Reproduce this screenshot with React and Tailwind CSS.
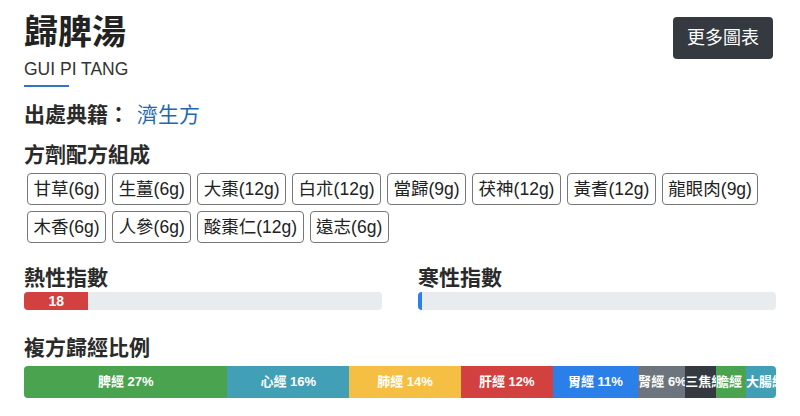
const herbs = [
  "甘草(6g)",
  "生薑(6g)",
  "大棗(12g)",
  "白朮(12g)",
  "當歸(9g)",
  "茯神(12g)",
  "黃耆(12g)",
  "龍眼肉(9g)",
  "木香(6g)",
  "人參(6g)",
  "酸棗仁(12g)",
  "遠志(6g)",
];

// widths are share of the bar, as read off the chart
const meridians = [
  { label: "脾經 27%", pct: 27.06, color: "bg-[#4aa34f]" },
  { label: "心經 16%", pct: 16.18, color: "bg-[#42a0b6]" },
  { label: "肺經 14%", pct: 14.85, color: "bg-[#f4bf43]" },
  { label: "肝經 12%", pct: 12.2, color: "bg-[#d2403f]" },
  { label: "胃經 11%", pct: 11.4, color: "bg-[#2b7fe8]" },
  { label: "腎經 6%", pct: 6.23, color: "bg-[#6c757d]" },
  { label: "三焦經 4%", pct: 4.11, color: "bg-[#343a40]" },
  { label: "膽經 4%", pct: 3.98, color: "bg-[#4aa34f]" },
  { label: "大腸經 4%", pct: 3.99, color: "bg-[#42a0b6]" },
];

function IndexBar({ title, value, color, showLabel }) {
  return (
    <div>
      <h5 className="text-[21px] leading-[25px] font-bold text-[#2a2a2a]">{title}</h5>
      <div className="mt-[2px] h-[18px] rounded-[4px] bg-[#e9ecef] flex overflow-hidden">
        <div
          className={`${color} h-full flex items-center justify-center text-white text-[14px] font-bold`}
          style={{ width: `${value}%` }}
        >
          {showLabel ? value : ""}
        </div>
      </div>
    </div>
  );
}

export default function App() {
  return (
    <div className="w-[800px] h-[416px] bg-white px-6 pt-3 text-[#212529] font-['Liberation_Sans','Noto_Sans_CJK_TC',sans-serif] overflow-hidden">
      {/* Header */}
      <div className="flex justify-between items-start">
        <div>
          <h1 className="text-[34px] leading-[40px] font-bold text-[#222]">歸脾湯</h1>
          <p className="mt-[7px] text-[17.5px] leading-[20px] text-[#333]">GUI PI TANG</p>
          <div className="mt-[6px] h-[2px] w-[45px] bg-[#3474c0]"></div>
        </div>
        <button className="mt-[5px] mr-[3px] h-[42px] w-[100px] rounded-[4px] bg-[#343a40] text-white text-[18px] leading-none">
          更多圖表
        </button>
      </div>

      {/* Source */}
      <h5 className="mt-[15px] text-[21px] leading-[25px] font-bold text-[#2a2a2a]">
        出處典籍：<span className="ml-[8px] font-normal text-[#2368ae]">濟生方</span>
      </h5>

      {/* Ingredients */}
      <h5 className="mt-[15px] text-[21px] leading-[25px] font-bold text-[#2a2a2a]">方劑配方組成</h5>
      <div className="mt-[3px] flex flex-wrap">
        {herbs.map((h) => (
          <span
            key={h}
            className="m-[3px] h-[32px] px-[5.5px] flex items-center border border-[#777] rounded-[4px] text-[17.5px] text-[#222]"
          >
            {h}
          </span>
        ))}
      </div>

      {/* Hot / cold index */}
      <div className="mt-[19px] grid grid-cols-2 gap-x-9">
        <IndexBar title="熱性指數" value={18} color="bg-[#d2403f]" showLabel />
        <IndexBar title="寒性指數" value={1} color="bg-[#2b7fe8]" />
      </div>

      {/* Meridian ratio */}
      <h5 className="mt-[25px] text-[21px] leading-[25px] font-bold text-[#2a2a2a]">複方歸經比例</h5>
      <div className="mt-[6px] h-[32px] flex rounded-[4px] overflow-hidden bg-[#e9ecef]">
        {meridians.map((m) => (
          <div
            key={m.label}
            className={`${m.color} h-full flex flex-col justify-center overflow-hidden whitespace-nowrap text-center text-white text-[13px] font-bold`}
            style={{ width: `${m.pct}%` }}
          >
            {m.label}
          </div>
        ))}
      </div>
    </div>
  );
}
